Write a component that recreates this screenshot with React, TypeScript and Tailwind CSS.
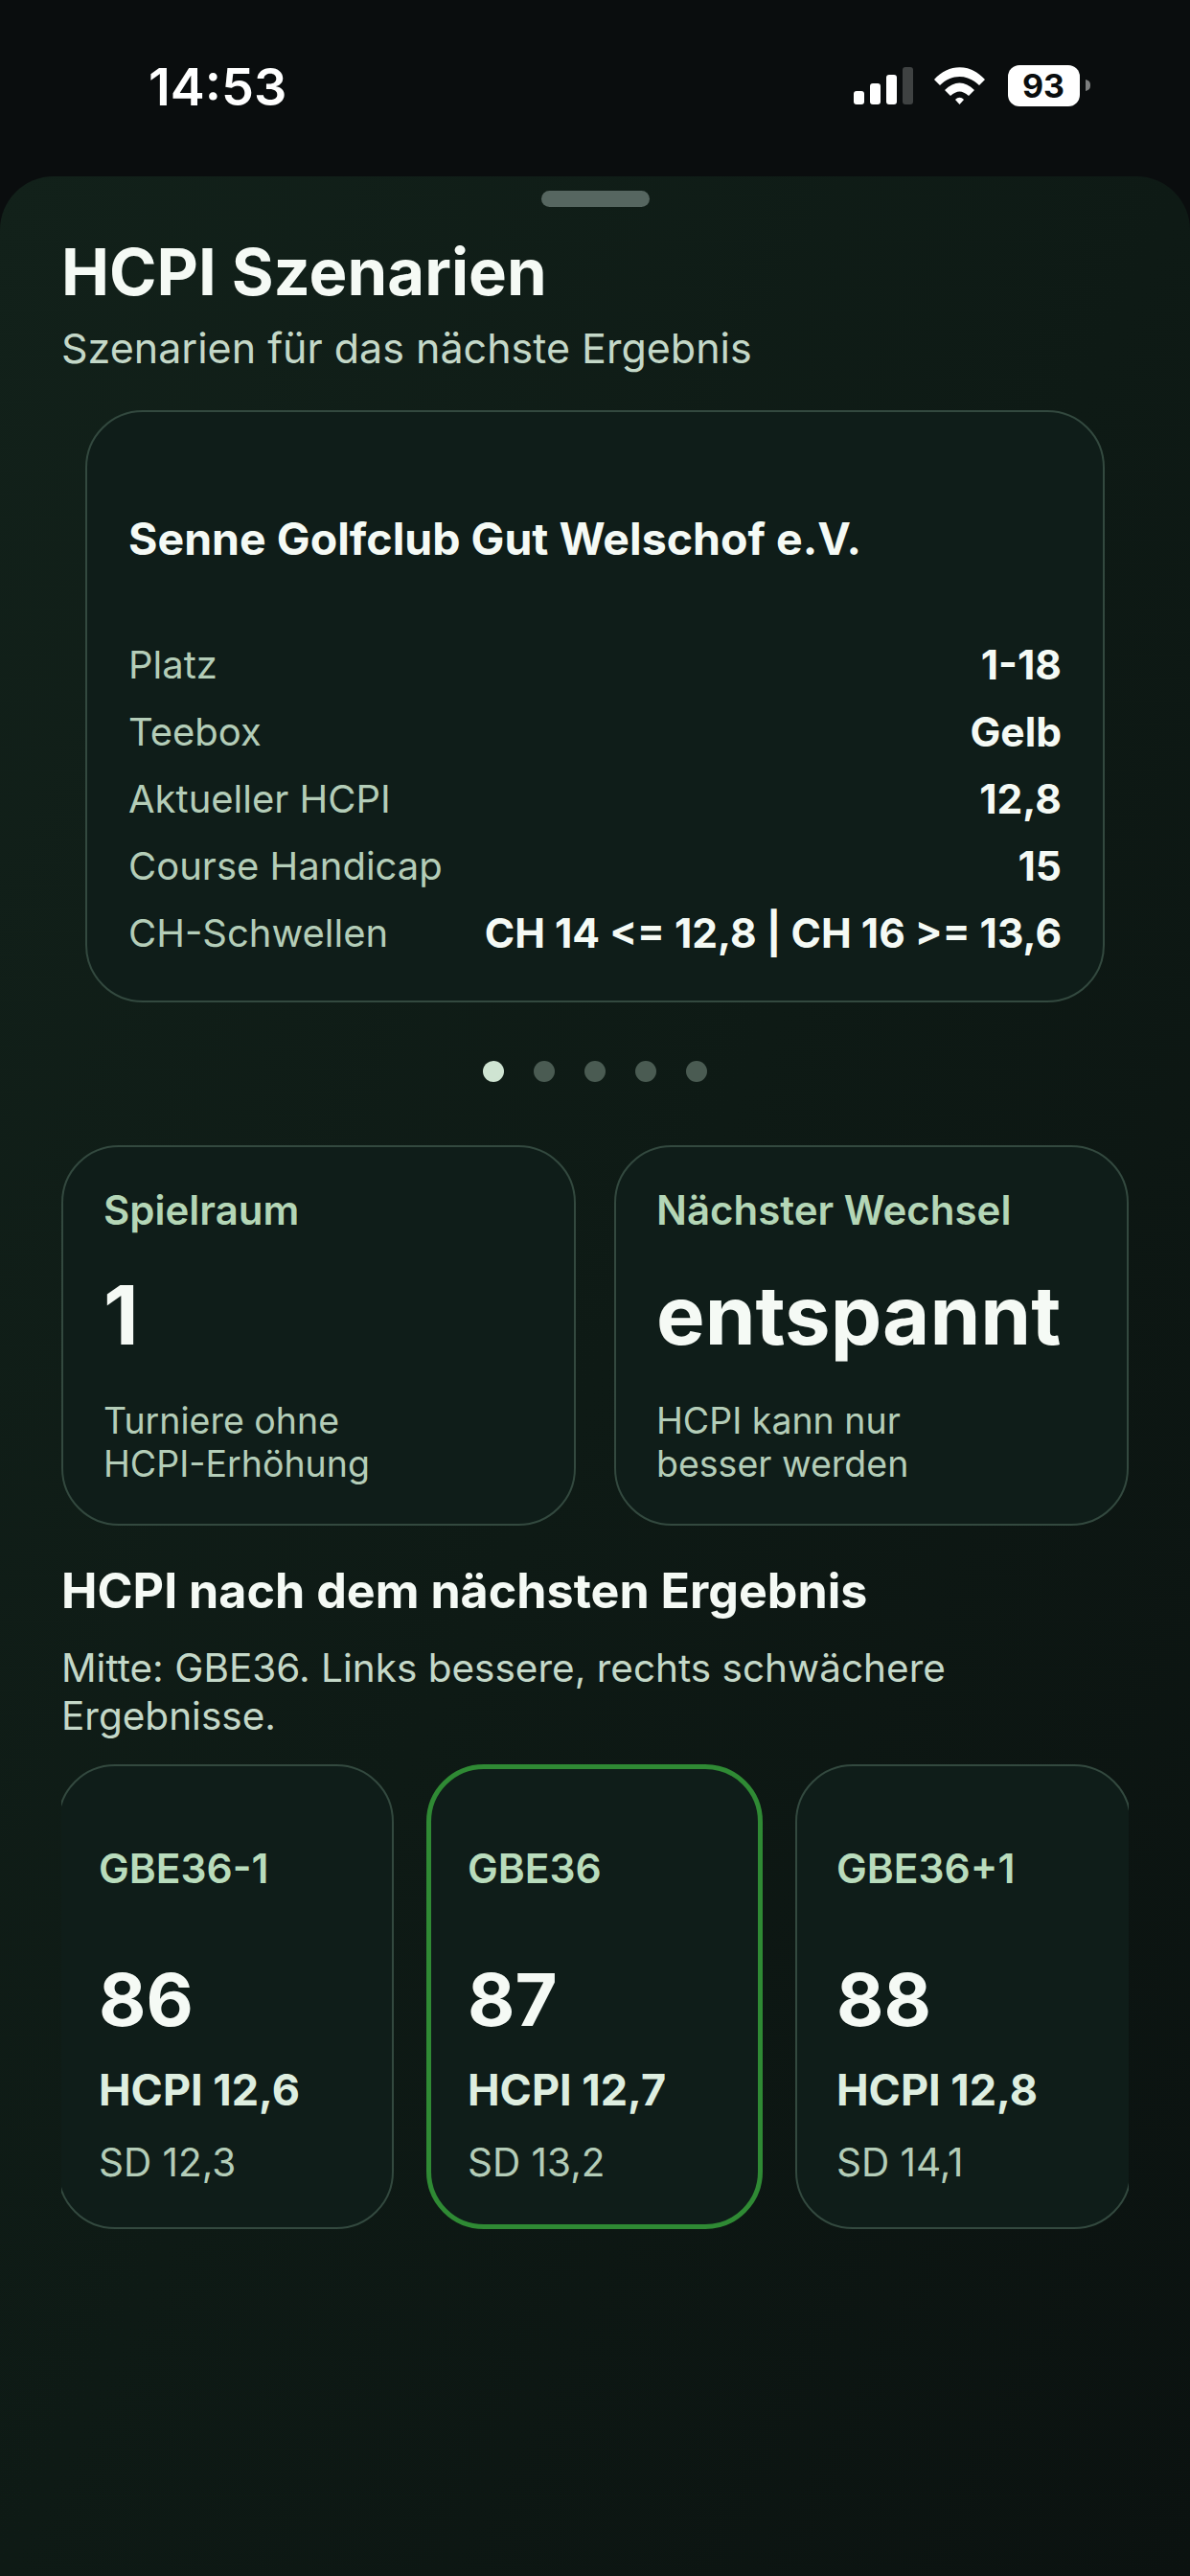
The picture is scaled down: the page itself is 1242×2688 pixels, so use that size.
const rows = [
  ["Platz", "1-18"],
  ["Teebox", "Gelb"],
  ["Aktueller HCPI", "12,8"],
  ["Course Handicap", "15"],
  ["CH-Schwellen", "CH 14 <= 12,8 | CH 16 >= 13,6"],
];

const results = [
  { label: "GBE36-1", score: "86", hcpi: "HCPI 12,6", sd: "SD 12,3", active: false },
  { label: "GBE36", score: "87", hcpi: "HCPI 12,7", sd: "SD 13,2", active: true },
  { label: "GBE36+1", score: "88", hcpi: "HCPI 12,8", sd: "SD 14,1", active: false },
];

const StatusBar = () => (
  <div className="flex h-[184px] shrink-0 items-start justify-between pl-[155px] pr-[101px] pt-[62px]">
    <span className="text-[54px] font-semibold leading-[58px] text-white">14:53</span>
    <svg width="250" height="50" viewBox="0 0 250 50" className="mt-[3px]">
      {/* signal */}
      <rect x="0" y="30" width="11" height="14" rx="3" fill="#fff" />
      <rect x="17" y="22" width="11" height="22" rx="3" fill="#fff" />
      <rect x="34" y="13" width="11" height="31" rx="3" fill="#fff" />
      <rect x="51" y="5" width="11" height="39" rx="3" fill="#3f4242" />
      {/* wifi */}
      <path d="M84 18 C99 1 122 1 137 18 L131 24 C119 12 102 12 90 24 Z" fill="#fff" />
      <path d="M95 29 C105 19 116 19 126 29 L120 35 C113 29 108 29 101 35 Z" fill="#fff" />
      <path d="M106 39 C109 36 112 36 115 39 L110.5 44 Z" fill="#fff" />
      {/* battery */}
      <rect x="161" y="3" width="75" height="43" rx="12" fill="#fff" />
      <path d="M242 18 C246 19 247 21 247 24 C247 27 246 29 242 30 Z" fill="#7c7e7e" />
      <text
        x="198"
        y="37"
        textAnchor="middle"
        fontSize="34"
        fontWeight="700"
        fontFamily="Inter, sans-serif"
        fill="#0a0d0e"
      >
        93
      </text>
    </svg>
  </div>
);

const StatCard = ({ title, value, lines }: { title: string; value: string; lines: string[] }) => (
  <div className="h-[397px] w-[537px] rounded-[60px] border-2 border-[#33493f] bg-[#0f1d19] pl-[42px] pt-[42px]">
    <p className="text-[42px] font-semibold leading-[48px] text-[#b4d6b6]">{title}</p>
    <p className="mt-[36px] text-[85px] font-bold leading-[100px] text-[#f5faf5]">{value}</p>
    <div className="mt-[37px] text-[37.5px] leading-[45px] text-[#b4cdb8]">
      {lines.map((line) => (
        <p key={line}>{line}</p>
      ))}
    </div>
  </div>
);

export default function App() {
  return (
    <div
      className="flex h-[2688px] w-[1242px] flex-col overflow-hidden bg-[#0a0d0e]"
      style={{ fontFamily: "Inter, 'Noto Sans', sans-serif" }}
    >
      <StatusBar />

      <div className="flex-1 rounded-t-[56px] bg-gradient-to-br from-[#12211a] via-[#0e1a15] to-[#0b1210]">
        <div className="mx-auto mt-[15px] h-[17px] w-[113px] rounded-full bg-[#566660]" />

        <div className="px-[64px]">
          <h1 className="mt-[28px] text-[67px] font-bold leading-[80px] text-[#f5faf5]">HCPI Szenarien</h1>
          <p className="mt-[14px] text-[43px] leading-[50px] text-[#c4d8c8]">Szenarien für das nächste Ergebnis</p>
        </div>

        {/* Carousel card */}
        <div className="mx-[89px] mt-[40px] h-[618px] rounded-[60px] border-2 border-[#33493f] bg-[#0f1d19] px-[43px] pt-[105px]">
          <h2 className="text-[46.5px] font-bold leading-[54px] text-[#f5faf5]">Senne Golfclub Gut Welschof e.V.</h2>
          <div className="mt-[78px] flex flex-col gap-[16px]">
            {rows.map(([label, value]) => (
              <div key={label} className="flex items-center justify-between leading-[54px]">
                <span className="text-[40px] leading-[54px] text-[#b4cdb8]">{label}</span>
                <span className="text-[42.5px] font-bold leading-[54px] text-[#f5faf5]">{value}</span>
              </div>
            ))}
          </div>
        </div>

        {/* Pager */}
        <div className="mt-[61px] flex justify-center gap-[31px]">
          <span className="size-[22px] rounded-full bg-[#cfe4d2]" />
          <span className="size-[22px] rounded-full bg-[#4a5b52]" />
          <span className="size-[22px] rounded-full bg-[#4a5b52]" />
          <span className="size-[22px] rounded-full bg-[#4a5b52]" />
          <span className="size-[22px] rounded-full bg-[#4a5b52]" />
        </div>

        <div className="mx-[64px] mt-[66px] flex gap-[40px]">
          <StatCard title="Spielraum" value="1" lines={["Turniere ohne", "HCPI-Erhöhung"]} />
          <StatCard title="Nächster Wechsel" value="entspannt" lines={["HCPI kann nur", "besser werden"]} />
        </div>

        <div className="px-[64px]">
          <h2 className="mt-[36px] text-[50.2px] font-bold leading-[64px] text-[#f5faf5]">
            HCPI nach dem nächsten Ergebnis
          </h2>
          <p className="mt-[24px] text-[40.5px] leading-[50px] text-[#c4d8c8]">
            Mitte: GBE36. Links bessere, rechts schwächere Ergebnisse.
          </p>
        </div>

        {/* Result strip, clipped like a scroll view */}
        <div className="mx-[64px] mt-[25px] overflow-hidden">
          <div className="-ml-[4px] flex gap-[34px]">
            {results.map((r) => (
              <div
                key={r.label}
                className={
                  r.active
                    ? "h-[485px] w-[351px] shrink-0 rounded-[60px] border-[5px] border-[#2f8a34] bg-[#0f1d19] pl-[38px] pt-[80px]"
                    : "h-[485px] w-[351px] shrink-0 rounded-[60px] border-2 border-[#33493f] bg-[#0f1d19] pl-[41px] pt-[83px]"
                }
              >
                <p className="text-[42.5px] font-semibold leading-[48px] text-[#b9dcbc]">{r.label}</p>
                <p className="mt-[67px] text-[76px] font-bold leading-[90px] text-[#f5faf5]">{r.score}</p>
                <p className="mt-[24px] text-[45px] font-bold leading-[52px] text-[#deeee0]">{r.hcpi}</p>
                <p className="mt-[26px] text-[40.5px] leading-[48px] text-[#b4cdb8]">{r.sd}</p>
              </div>
            ))}
          </div>
        </div>
      </div>
    </div>
  );
}
